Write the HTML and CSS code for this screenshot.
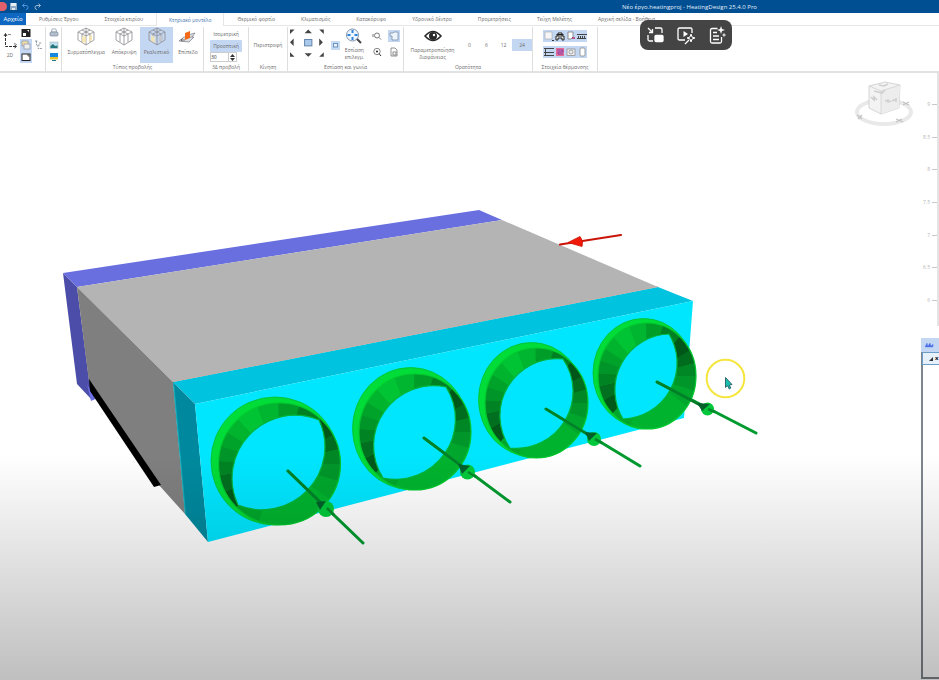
FILE: index.html
```html
<!DOCTYPE html>
<html lang="el">
<head>
<meta charset="utf-8">
<title>HeatingDesign</title>
<link rel="stylesheet" href="styles.css">
</head>
<body>
<header class="titlebar">
  <div class="quick">
    <span class="orb"></span>
    <button class="q" aria-label="Save"><svg width="9" height="9" viewBox="0 0 9 9"><rect x="1" y="1" width="7" height="7" fill="#8fa9c4"/><rect x="2" y="1" width="5" height="3" fill="#e8eef5"/><rect x="3" y="6" width="3" height="2" fill="#dfe7ef"/></svg></button>
    <button class="q" aria-label="Undo"><svg width="9" height="9" viewBox="0 0 9 9" fill="none" stroke="#4f92dc"><path d="M3.500 1.500 1.500 3.500 3.500 5.500M1.500 3.500H5a2 2 0 0 1 0 4"/></svg></button>
    <button class="q" aria-label="Redo"><svg width="9" height="9" viewBox="0 0 9 9" fill="none" stroke="#9cb6cf"><path d="M5.500 1.500 7.500 3.500 5.500 5.500M7.500 3.500H4a2 2 0 0 0 0 4"/></svg></button>
  </div>
  <h1 class="title">Νέο έργο.heatingproj - HeatingDesign 25.4.0 Pro</h1>
</header>
<nav class="tabs">
  <button class="tab file">Αρχείο</button>
  <button class="tab">Ρυθμίσεις Έργου</button>
  <button class="tab">Στοιχεία κτιρίου</button>
  <button class="tab active">Κτηριακό μοντέλο</button>
  <button class="tab">Θερμικό φορτίο</button>
  <button class="tab">Κλιματισμός</button>
  <button class="tab">Κατακόρυφο</button>
  <button class="tab">Υδρονικό δέντρο</button>
  <button class="tab">Προμετρήσεις</button>
  <button class="tab">Τεύχη Μελέτης</button>
  <button class="tab">Αρχική σελίδα - Βοήθεια</button>
</nav>
<div class="ribbon">
  <section class="group g-view">
    <div class="row">
      <button class="tool axes"><svg width="16" height="18" viewBox="0 0 16 18" fill="none" stroke="#333"><path d="M3.500 2v12.500H14" stroke-dasharray="3 1"/><path d="M2 4l1.500-2.500L5 4M12.500 13l2 1.500-2 1.500"/><path d="M6 2.500h3M12 11l3 2" stroke="#888"/></svg><span>2D</span></button>
      <div class="stack">
        <button class="mini" aria-label="Contrast"><svg width="10" height="10" viewBox="0 0 10 10"><rect x=".5" y="1" width="9" height="8" fill="#222"/><path d="M2 5h3v3H2zM6 2h2v2z" fill="#fff"/></svg></button>
        <button class="mini on" aria-label="Layers"><svg width="10" height="10" viewBox="0 0 10 10"><rect x="1" y="1" width="6" height="5" fill="#f4dfa5" stroke="#8d93a5" stroke-width=".7"/><rect x="3" y="4" width="6" height="5" fill="#eee" stroke="#8d93a5" stroke-width=".7"/></svg></button>
        <button class="mini on" aria-label="Frame"><svg width="10" height="10" viewBox="0 0 10 10"><rect x="1" y="2" width="8" height="6.500" fill="#fff" stroke="#222"/><path d="M6 3h2v2" fill="none" stroke="#222" stroke-width=".7"/></svg></button>
      </div>
      <button class="mini" aria-label="Tree"><svg width="9" height="10" viewBox="0 0 9 10" fill="none" stroke="#8794a2" stroke-width=".9"><path d="M1 1h3M2.500 1v4H6M4 5v3.500h4M5 3h3" stroke-dasharray="2 .7"/></svg></button>
    </div>
  </section>
  <section class="group g-out">
    <div class="stack">
      <button class="mini" aria-label="Print"><svg width="10" height="10" viewBox="0 0 10 10"><path d="M3 1h4l.5 3h-5z" fill="#fff" stroke="#8894a6" stroke-width=".7"/><rect x="1" y="4" width="8" height="4" rx="1" fill="#b3bfcd" stroke="#718096" stroke-width=".6"/></svg></button>
      <button class="mini" aria-label="Image"><svg width="10" height="10" viewBox="0 0 10 10"><rect x="1" y="2" width="8" height="6.500" fill="#bfe0ee" stroke="#a5b5bd" stroke-width=".6"/><path d="M1.500 8V6l2.500-2 2 2 2.500-.5V8z" fill="#23767c"/></svg></button>
      <button class="mini" aria-label="Screen"><svg width="10" height="10" viewBox="0 0 10 10"><rect x="1" y="1" width="8" height="6" fill="#1688dd"/><rect x="1" y="5" width="8" height="2.500" fill="#e8c42b"/><path d="M3 8.500h4" stroke="#2a7a91"/></svg></button>
    </div>
  </section>
  <section class="group g-type">
    <div class="row">
      <button class="tool"><svg width="22" height="20" viewBox="0 0 22 20"><use href="#cube"/><path d="M7 10l4-1v7l-4-1zM14 9l3-1v5l-3 2z" fill="#f5e3a5" opacity=".8"/></svg><span>Συρματόπλεγμα</span></button>
      <button class="tool"><svg width="22" height="20" viewBox="0 0 22 20"><use href="#cube"/></svg><span>Απόκρυψη</span></button>
      <button class="tool on"><svg width="22" height="20" viewBox="0 0 22 20"><use href="#cube"/><path d="M5 8l4 2v6l-4-2z" fill="#eee3bb"/><path d="M13 10l4-2v5l-4 2z" fill="#c3c7cf"/></svg><span>Ρεαλιστικό</span></button>
      <button class="tool"><svg width="22" height="20" viewBox="0 0 22 20"><path d="M2 14l5-4h10l-5 5zM11 8l7-2-3 4" fill="#dfe0e4" stroke="#747a84" stroke-width=".7"/><path d="M8 6l5-2v7l-5 2z" fill="#f26a18"/><path d="M8 13H4m1.500-1.500L4 13l1.500 1.500" fill="none" stroke="#555" stroke-width=".8"/></svg><span>Επίπεδο</span></button>
    </div>
    <h2>Τύπος προβολής</h2>
  </section>
  <section class="group g-proj">
    <div class="list">
      <button class="text">Ισομετρική</button>
      <button class="text on">Προοπτική</button>
      <div class="spin"><input aria-label="Γωνία" value="30"><span><button aria-label="Up"><svg width="5" height="3" viewBox="0 0 5 3"><path d="M0 3 2.500 0 5 3z" fill="#333"/></svg></button><button aria-label="Down"><svg width="5" height="3" viewBox="0 0 5 3"><path d="M0 0 2.500 3 5 0z" fill="#333"/></svg></button></span></div>
    </div>
    <h2>3Δ προβολή</h2>
  </section>
  <section class="group g-move">
    <div class="list mid"><button class="text">Περιστροφή</button></div>
    <h2>Κίνηση</h2>
  </section>
  <section class="group g-focus">
    <div class="row">
      <svg class="pad" width="46" height="36" viewBox="0 0 46 36" fill="#454545"><path d="M0 1h5L0 6zM16 5l4-4 4 4zM37 1h-5l5 5zM0 15l4-4v8zM36 15l-4-4v8zM0 31h5l-5-5zM16 27l4 4 4-4zM37 31h-5l5-5z"/><rect x="16" y="12" width="8" height="7" fill="#a9c9ec" stroke="#5c7da3"/></svg>
      <button class="mini" aria-label="Centre"><svg width="9" height="9" viewBox="0 0 9 9"><rect width="9" height="9" fill="#c6dcf3"/><rect x="2.500" y="2.500" width="4" height="3.500" fill="#e6f2fd" stroke="#6f93bb"/></svg></button>
      <button class="tool zoomer"><svg width="18" height="18" viewBox="0 0 18 18"><circle cx="7.500" cy="8" r="6" fill="#edf6ff" stroke="#8194aa"/><path d="M7.500 3v10M2.500 8h10" stroke="#2f83dc" stroke-width="2" stroke-dasharray="3 4"/><path d="M12 12l4 4" stroke="#444" stroke-width="2"/></svg><span>Εστίαση<br>επιλεγμ.</span></button>
      <div class="stack wide">
        <button class="mini" aria-label="Zoom window"><svg width="10" height="10" viewBox="0 0 10 10" fill="none" stroke="#777"><circle cx="5" cy="4.500" r="2.500"/><path d="M7 6.500l2 2M1 3v3"/></svg></button>
        <button class="mini" aria-label="Zoom all"><svg width="10" height="10" viewBox="0 0 10 10" fill="none" stroke="#666"><circle cx="5" cy="4.500" r="3.200" stroke-width=".8"/><path d="M7 6.500l2 2.500" stroke="#333"/><circle cx="5" cy="4.500" r="1" fill="#222" stroke="none"/></svg></button>
      </div>
      <div class="stack wide">
        <button class="mini on" aria-label="Select area"><svg width="10" height="10" viewBox="0 0 10 10" fill="#edf4fc" stroke="#7b91aa" stroke-width=".8"><path d="M1 2h3l1-1h4v8H3V5H1z"/></svg></button>
        <button class="mini" aria-label="Copy area"><svg width="10" height="10" viewBox="0 0 10 10" fill="none" stroke="#777" stroke-width=".8"><path d="M2 1h4l2 2v6H2z"/><rect x="4" y="5" width="3" height="3"/></svg></button>
      </div>
    </div>
    <h2>Εστίαση και γωνία</h2>
  </section>
  <section class="group g-vis">
    <div class="row">
      <button class="tool eye"><svg width="18" height="18" viewBox="0 0 18 18"><path d="M1 9Q9 0 17 9 9 18 1 9z" fill="#fff" stroke="#292929" stroke-width="1.600"/><circle cx="9" cy="9" r="4" fill="#292929"/><circle cx="10" cy="8" r="1.200" fill="#fff"/></svg><span>Παραμετροποίηση<br>διαφάνειας</span></button>
      <div class="levels"><button>0</button><button>6</button><button>12</button><button class="on">24</button></div>
    </div>
    <h2>Ορατότητα</h2>
  </section>
  <section class="group g-heat">
    <div class="matrix">
      <button aria-label="Room"><svg width="10" height="10" viewBox="0 0 10 10"><rect x="1" y="1" width="7" height="7" fill="#f6f6f6" stroke="#999" stroke-width=".5"/><path d="M8 9.500h2" stroke="#333"/></svg></button>
      <button aria-label="Boiler"><svg width="10" height="10" viewBox="0 0 10 10" fill="#eee" stroke="#222"><path d="M1 9V5h8v4H7V7H3v2zM3 5V2h4v3M1.500 3.500h7"/></svg></button>
      <button aria-label="Pipe"><svg width="10" height="10" viewBox="0 0 10 10"><path d="M2 1h5v5l-2 2H2z" fill="#fff" stroke="#777" stroke-width=".8"/><path d="M6 7h3" stroke="#b52a72" stroke-width="1.500"/></svg></button>
      <button aria-label="Radiator"><svg width="10" height="10" viewBox="0 0 10 10" fill="none" stroke="#444"><path d="M0 3.500h10M1.500 5v2M3.500 5v2M5.500 5v2M7.500 5v2M0 7.500h9"/></svg></button>
      <button aria-label="Floor"><svg width="10" height="10" viewBox="0 0 10 10" stroke="#444" fill="#fff"><path d="M0 1.500h10M0 5.500h10M0 8.500h10M1.500 1v8"/></svg></button>
      <button aria-label="Loop"><svg width="10" height="10" viewBox="0 0 10 10"><rect x="1" y="1" width="8" height="8" fill="#e66a91"/><path d="M2 3h6v2H3v2h5" fill="none" stroke="#8447b4"/></svg></button>
      <button aria-label="Fan"><svg width="10" height="10" viewBox="0 0 10 10" fill="#eee" stroke="#888" stroke-width=".7"><rect x="1" y="2" width="8" height="6.500"/><circle cx="5" cy="5" r="2"/></svg></button>
      <button aria-label="Panel"><svg width="10" height="10" viewBox="0 0 10 10"><rect x="3" y="1" width="5" height="8" rx="1" fill="#fff" stroke="#888" stroke-width=".8"/></svg></button>
    </div>
    <h2>Στοιχεία θέρμανσης</h2>
  </section>
</div>
<main class="workspace">
  <div class="viewport">
    <svg class="scene" viewBox="0 73 921 607" preserveAspectRatio="xMidYMin slice" role="img" aria-label="3D">
      <defs>
        <g id="cube"><path d="M3 5l8-4 8 4v8l-8 5-8-5zM3 5l8 4 8-4M11 9v9M7 3l8 4v8M15 3L7 7v8M11 1v8" fill="none" stroke="#8c8c90" stroke-width=".8"/></g>
        <g id="facets" fill="none" stroke-width="60">
          <circle r="70" stroke="#00a72c"/>
          <circle r="70" pathLength="360" stroke="#00b32e" stroke-dasharray="75 285" stroke-dashoffset="-35"/>
          <circle r="70" pathLength="360" stroke="#005819" stroke-dasharray="18 342" stroke-dashoffset="-135"/>
          <circle r="70" pathLength="360" stroke="#006f1f" stroke-dasharray="16 344" stroke-dashoffset="-153"/>
          <circle r="70" pathLength="360" stroke="#008323" stroke-dasharray="14 346" stroke-dashoffset="-169"/>
          <circle r="70" pathLength="360" stroke="#009528" stroke-dasharray="14 346" stroke-dashoffset="-183"/>
          <circle r="70" pathLength="360" stroke="#00a32a" stroke-dasharray="14 346" stroke-dashoffset="-197"/>
          <circle r="70" pathLength="360" stroke="#00b42e" stroke-dasharray="16 344" stroke-dashoffset="-211"/>
          <circle r="70" pathLength="360" stroke="#00c433" stroke-dasharray="22 338" stroke-dashoffset="-227"/>
          <circle r="70" pathLength="360" stroke="#00b52f" stroke-dasharray="20 340" stroke-dashoffset="-249"/>
          <circle r="70" pathLength="360" stroke="#009e29" stroke-dasharray="20 340" stroke-dashoffset="-269"/>
          <circle r="70" pathLength="360" stroke="#008022" stroke-dasharray="24 336" stroke-dashoffset="-289"/>
          <circle r="70" pathLength="360" stroke="#005618" stroke-dasharray="20 340" stroke-dashoffset="-312"/>
          <circle r="70" pathLength="360" stroke="#006d1e" stroke-dasharray="15 345" stroke-dashoffset="-331"/>
          <circle r="70" pathLength="360" stroke="#008725" stroke-dasharray="14 346" stroke-dashoffset="-346"/>
          <circle r="70" pathLength="360" stroke="#00962a" stroke-dasharray="16 344"/>
        </g>
      </defs>
      <path d="M63 273 479 210 502 220 77 287z" fill="#696fdf"/>
      <path d="M63 273 77 287 89 380 95 399 92 400 77 384z" fill="#4c4da8"/>
      <path d="M87 384 95 399 91 401z" fill="#6d70e4"/>
      <path d="M77 287 502 220 658 287 173 382z" fill="#b4b4b4"/>
      <path d="M77 287 173 382 185 514 158 484 89 382z" fill="#7f7f7f"/>
      <path d="M89 379 161 485 154 487 90 391z" fill="#000"/>
      <path d="M173 382 658 287 693 301 195 404z" fill="#00c4df"/>
      <path d="M173 382 195 404 208 542 185 514z" fill="#00899e"/>
      <path d="M195 404 693 301 684 418 208 542z" fill="#00e6ff"/>
      <path d="M173 381.500 658 286.500" stroke="#d4a79f" stroke-width=".7"/>
      <path d="M173.500 382 185.500 514" stroke="#14aeba" stroke-width="1"/>

      <g stroke="#00c030" stroke-width=".8" fill="#00dc38">
        <ellipse cx="275" cy="461" rx="64" ry="64"/>
        <ellipse cx="410.500" cy="428.500" rx="58" ry="61"/>
        <ellipse cx="531.500" cy="399.500" rx="53" ry="57"/>
        <ellipse cx="643.500" cy="373" rx="50.500" ry="54.500"/>
      </g>
      <use href="#facets" transform="translate(279.500 464) scale(.61)"/>
      <use href="#facets" transform="translate(415 432) scale(.56 .58)"/>
      <use href="#facets" transform="translate(536.500 403) scale(.515 .55)"/>
      <use href="#facets" transform="translate(647 376) scale(.49 .53)"/>
      <g fill="none" stroke="#00c92f" stroke-width="1.200">
        <ellipse cx="279.500" cy="464" rx="61" ry="61"/>
        <ellipse cx="415" cy="432" rx="56" ry="58"/>
        <ellipse cx="536.500" cy="403" rx="51.500" ry="55"/>
        <ellipse cx="647" cy="376" rx="49" ry="53"/>
      </g>
      <g fill="#00e6ff" stroke="#00b43a" stroke-width="1.200">
        <path d="M319 420A63 63 0 0 0 238 505 63 63 0 0 0 319 420z"/>
        <path d="M446 387A60 60 0 0 0 383 478 60 60 0 0 0 446 387z"/>
        <path d="M563 359A57 57 0 0 0 510 448 57 57 0 0 0 563 359z"/>
        <path d="M669 334A56 56 0 0 0 623 419 56 56 0 0 0 669 334z"/>
      </g>
      <g stroke="#009a2f" stroke-width="3" stroke-linecap="round">
        <path d="M288 471 363 543M424 438 510 502M546 409 640 466M657 382 756 433"/>
      </g>
      <g stroke="#008029" stroke-width="2.600" stroke-linecap="round">
        <path d="M288 471 320 502M424 438 460 465M546 409 587 434M657 382 700 405"/>
      </g>
      <g fill="#00c83a">
        <circle cx="326" cy="509" r="8"/><circle cx="467.500" cy="472" r="7.500"/><circle cx="594" cy="439" r="7"/><circle cx="707.500" cy="409" r="6.500"/>
      </g>
      <g fill="#00602a">
        <path d="M316 502 326 501 320 510zM458 464 470 466 462 474zM585 432 597 433 589 441zM697 403 710 404 702 411z"/>
      </g>
      <g stroke="#008a2b" stroke-width="2.600"><path d="M327 508 334 515M468 472 476 477M595 439 602 443M708 409 715 412"/></g>
      <path d="M560 244.500 621 235" stroke="#c91408" stroke-width="2.200" stroke-linecap="round"/>
      <path d="M568 242.500 580 236.500Q584 241 582 246.500z" fill="#f11909" stroke="#c91408" stroke-width=".8"/>
      <circle cx="725.500" cy="378.500" r="18.800" fill="none" stroke="#f4e63c" stroke-width="2"/>
      <path d="M725.500 377.500V387.500L727.500 385.700 729.300 389 730.800 388 729.300 385 732 384.500z" fill="#19bfae" stroke="#255c66" stroke-width=".9"/>
    </svg>
    <svg class="viewcube" width="60" height="48" viewBox="0 0 60 48">
      <ellipse cx="30" cy="33" rx="27" ry="12" fill="none" stroke="#e4e4e4" stroke-width="4"/>
      <path d="M15 7 31 3 46 6 45 29 27 35 15 29z" fill="#f1f1f1" stroke="#b8b8b8" stroke-width=".7"/>
      <path d="M27 12 46 6 45 29 27 35z" fill="#e9e9e9"/>
      <path d="M15 7 27 12 46 6M27 12V35" fill="none" stroke="#c2c2c2" stroke-width=".7"/>
      <path d="M17 18l3 3v-3l3 3M31 22l3-1v2l3-1M38 22l4-2v3M25 6l5 1 4-2M20 12l8 2 3-3" fill="none" stroke="#c4c4c4" stroke-width="1.600"/>
      <path d="M3 36l5 4M4 40l4-4M42 40l7 3M42 43l6-3M49 23l6 3M49 26l6-3" stroke="#b4b4b4" stroke-width="1.200"/>
    </svg>
  </div>
  <aside class="side">
    <ol class="ruler"><li>9</li><li>8.5</li><li>8</li><li>7.5</li><li>7</li><li>6.5</li><li>6</li></ol>
    <button class="dock" aria-label="Panel"><svg width="10" height="8" viewBox="0 0 10 8"><path d="M1 6l2-4 1 3 2-3 1 3 2-2v3z" fill="#3b62e6" stroke="#7690ed" stroke-width=".6"/></svg></button>
    <div class="panel"><div class="panel-head"><svg width="4" height="4" viewBox="0 0 4 4"><path d="M4 0v4H0z" fill="#333"/></svg><b>x</b></div></div>
  </aside>
</main>
<div class="floating">
  <button aria-label="Picture in picture"><svg width="18" height="18" viewBox="0 0 18 18" fill="none" stroke="#fff" stroke-width="1.300"><path d="M2 2l4.500 4.500M6.500 3v3.500H3M9 2h5.500q1.500 0 1.500 1.500V7M2 9v4.500Q2 15 3.500 15H7"/><rect x="9" y="9.500" width="8" height="6" rx="1" fill="#fff"/></svg></button>
  <button aria-label="Video tools"><svg width="20" height="20" viewBox="0 0 20 20" fill="none" stroke="#fff" stroke-width="1.300"><path d="M9 15H3.500Q2 15 2 13.500v-9Q2 3 3.500 3h11Q16 3 16 4.500V8M13 15l-4 4"/><path d="M15 9l1 3 3 1-3 1-1 3-1-3-3-1 3-1z" stroke-width="1"/><path d="M7.500 6v6l4.500-3z" fill="#fff" stroke="none"/></svg></button>
  <button aria-label="Summary"><svg width="18" height="18" viewBox="0 0 18 18" fill="none" stroke="#fff" stroke-width="1.300"><path d="M9.500 2.500H4Q2.500 2.500 2.500 4v11.500Q2.500 17 4 17h8q1.500 0 1.500-1.500V11M5 6.500h4M5 10h6M5 13.500h6"/><path d="M13 0l1 3 3 1-3 1-1 3-1-3-3-1 3-1zM16 6.500l.6 1.900 1.900.6-1.900.6-.6 1.900-.6-1.900-1.900-.6 1.900-.6z" fill="#fff" stroke="none"/></svg></button>
</div>
</body>
</html>
```
FILE: styles.css
```css
* { box-sizing: border-box; }
body {
  margin: 0;
  min-height: 100vh;
  display: flex;
  flex-direction: column;
  position: relative;
  overflow: hidden;
  background: #fff;
  color: #6c6c6c;
  font: 5px/7px "Open Sans", "Noto Sans", sans-serif;
}
button, input { margin: 0; padding: 0; border: 0; background: none; color: inherit; font: inherit; }
svg { display: block; flex: none; }
h1, h2, ol { margin: 0; padding: 0; font: inherit; }

.titlebar { display: flex; align-items: center; height: 13px; background: #004f92; color: #e4eefa; }
.quick { display: flex; gap: 2px; align-items: center; width: 440px; }
.orb { width: 7px; height: 9px; border-radius: 0 5px 5px 0; background: #e2606a; }
.q { width: 10px; }
.title { flex: 1; text-align: center; font-size: 6px; line-height: 12px; }

.tabs { display: flex; height: 13px; border-bottom: 1px solid #e6e6e6; }
.tab { padding: 0 13px; line-height: 12px; white-space: nowrap; }
.tab.file { width: 26px; padding: 0; background: #0e68c2; color: #fff; font-size: 6px; }
.tab.active { margin-bottom: -1px; background: #fff; border: solid #e6e6e6; border-width: 0 1px; padding: 0 12px; color: #4473ae; }

.ribbon { display: flex; height: 47px; padding-top: 1px; border-bottom: 2px solid #e2e2e2; }
.group { display: flex; flex: none; flex-direction: column; border-right: 1px solid #dedede; }
.group h2 { margin-top: auto; text-align: center; line-height: 8px; white-space: nowrap; }
.row { display: flex; height: 36px; }
.stack { display: flex; flex-direction: column; gap: 0; align-items: center; }
.stack.wide { gap: 4px; padding-top: 3px; width: 18px; }
.mini { display: flex; align-items: center; justify-content: center; width: 12px; height: 12px; }
.on { background: #c4d7f2; }
.tool { display: flex; flex-direction: column; align-items: center; gap: 2px; white-space: nowrap; }
.g-view { width: 46px; }
.g-view .row { align-items: center; }
.axes { width: 20px; }
.g-out { width: 16px; align-items: center; }
.g-type { width: 142px; }
.g-type .row { padding-left: 2px; }
.g-type .tool { flex: 1 0 auto; min-width: 30px; padding: 0 2px; }
.g-type .tool.on { min-width: 33px; }
.g-proj { width: 45px; }
.list { display: flex; flex-direction: column; height: 36px; padding: 1px 6px; }
.text { height: 12px; white-space: nowrap; }
.text.on { border-radius: 1px; }
.mid { justify-content: center; align-items: center; }
.spin { display: flex; width: 27px; height: 10px; border: 1px solid #ccc; color: #333; }
.spin input { min-width: 0; flex: 1; }
.spin span { display: flex; flex-direction: column; justify-content: space-around; width: 8px; padding-left: 1px; border-left: 1px solid #ccc; }
.spin button { height: 3px; }
.g-move { width: 39px; }
.g-focus { width: 116px; }
.g-focus .row { padding-left: 2px; }
.pad { width: 42px; height: 36px; margin-right: -1px; }
.g-focus .row > .mini { align-self: center; width: 10px; }
.zoomer { width: 28px; }
.g-vis { width: 129px; }
.eye { width: 58px; }
.levels { display: flex; flex: 1; align-items: center; justify-content: flex-end; }
.levels button { width: 17px; height: 12px; }
.levels .on { width: 20px; }
.g-heat { width: 65px; }
.matrix { display: grid; grid-template-columns: repeat(4, 11px); gap: 4px 0; justify-content: center; padding-top: 3px; }
.matrix button { height: 12px; background: #c4d7f2; display: grid; place-items: center; }

.workspace { position: relative; display: flex; flex: 1; min-height: 0; }
.workspace::after { content: ""; position: absolute; inset: auto 0 0; height: 37%; background: linear-gradient(transparent, rgba(0, 0, 0, .25)); pointer-events: none; }
.viewport { position: relative; flex: 1; min-width: 0; }
.scene { width: 100%; height: 100%; }
.viewcube { position: absolute; top: 6px; right: 7px; opacity: .8; }
.side { display: flex; flex-direction: column; width: 18px; padding-bottom: 1px; }
.ruler { display: flex; flex-direction: column; list-style: none; height: 253px; margin-bottom: 12px; padding: 15px 0 9px; border-right: 2px solid #e4e4e4; color: #b4b4b4; }
.ruler li { display: flex; flex: 1; align-items: center; justify-content: flex-end; gap: 2px; }
.ruler li::after { content: ""; width: 5px; height: 1px; background: #c8c8c8; }
.dock { height: 14px; padding-left: 3px; background: #c4d7f2; }
.panel { flex: 1; border: solid #7e858c; border-width: 0 0 2px 2px; }
.panel-head { display: flex; align-items: center; gap: 2px; height: 13px; margin-left: -1px; padding-left: 6px; border: 1px solid #6d9cc4; border-right: 0; background: #e6f1fc; color: #111; font-size: 6px; }

.floating { position: absolute; top: 20px; left: 640px; display: flex; align-items: center; justify-content: space-around; width: 92px; height: 30px; border-radius: 8px; background: #444; }
```
